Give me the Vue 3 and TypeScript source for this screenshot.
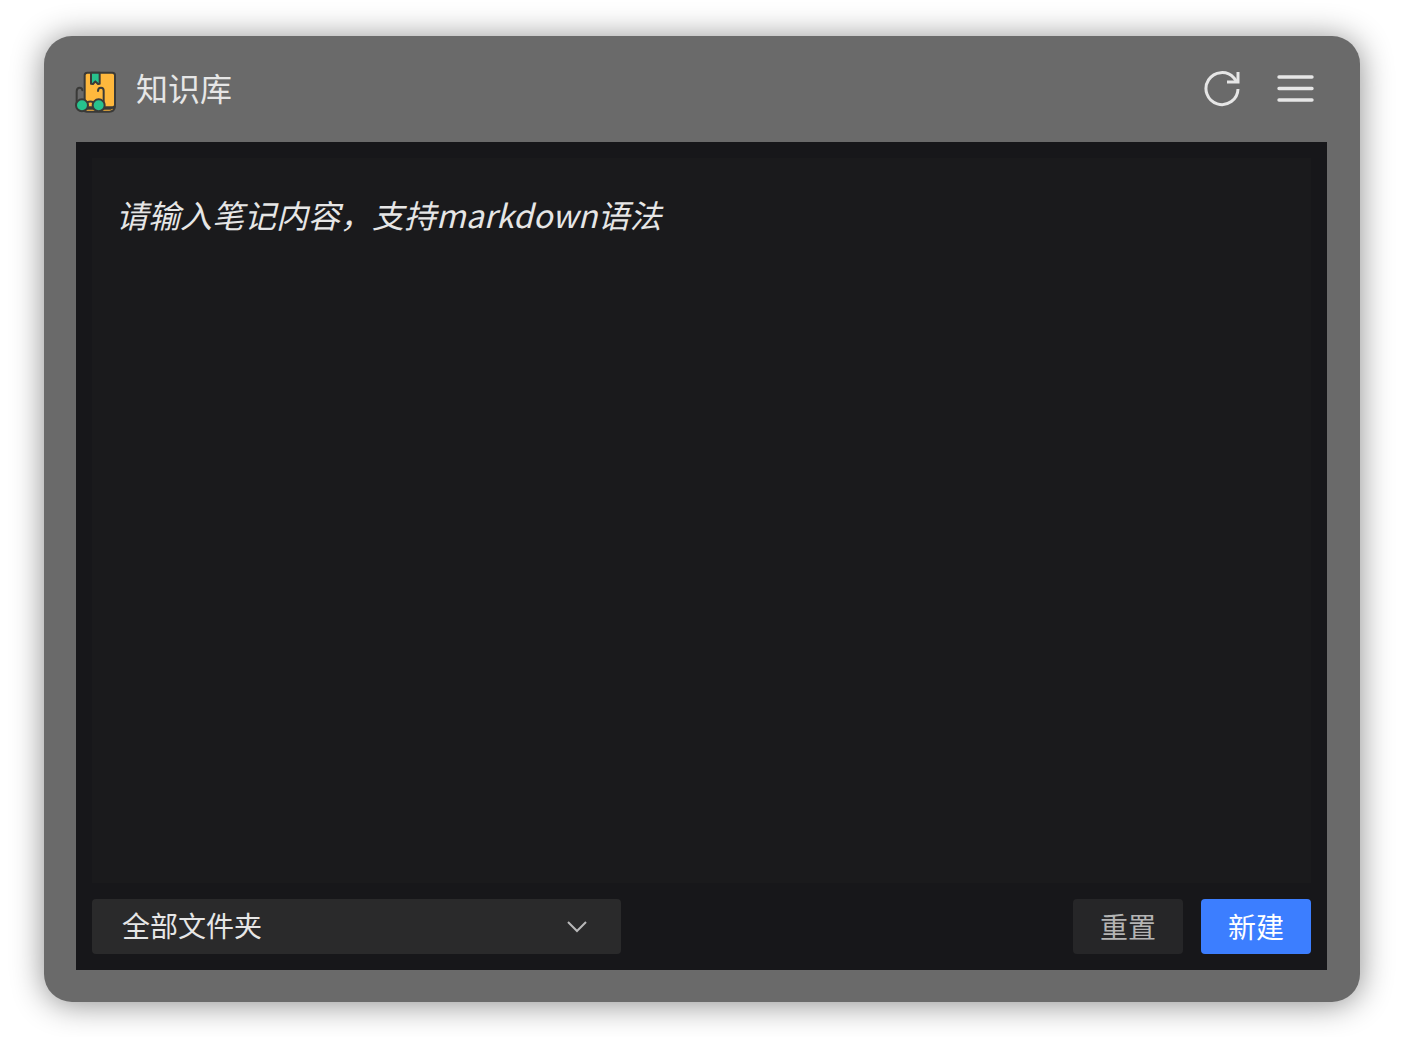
<script setup lang="ts">
import { ref } from 'vue'

const folders = ['全部文件夹']
const folder = ref(folders[0])
const note = ref('')

function reset() {
  note.value = ''
}
</script>

<template>
  <div class="page">
    <main class="panel">
      <header class="header">
        <svg class="logo" viewBox="24 30 132 132" fill="none" stroke="#3a3a38" stroke-width="6" stroke-linecap="round" stroke-linejoin="round" aria-hidden="true">
          <path d="M50 146 H134 L147 140 Q145 155 130 155 H63 Q50 153 50 146Z" fill="#ffb83d" />
          <path d="M56 134 V46 Q56 38 64 38 H139 Q147 38 147 46 V134 Q147 142 139 142 H56Z" fill="#ffb83d" />
          <path d="M75 38 H101 V71 L96 72 L88 64 L81 72 L75 71Z" fill="#27c28d" />
          <path d="M32 132 V94 Q32 83 41 83 Q49 83 49 91" />
          <path d="M96 93 Q96 83 105 83 Q113 83 113 92 V131" />
          <path d="M63 127 Q73 122 83 127" />
          <circle cx="48" cy="136" r="18" fill="#27c28d" />
          <circle cx="98" cy="136" r="18" fill="#27c28d" />
        </svg>
        <h1 class="title">知识库</h1>
        <button class="icon-button" type="button" aria-label="刷新" @click="reset">
          <svg viewBox="0 0 40 40" fill="none" stroke="#e6e6e6" stroke-width="3">
            <path d="M35 20 A16 16 0 1 1 31 9 L34 13" />
            <path d="M35 3 V13 H24" />
          </svg>
        </button>
        <button class="icon-button" type="button" aria-label="菜单">
          <svg viewBox="0 0 40 40" fill="none" stroke="#e6e6e6" stroke-width="3.4" stroke-linecap="round">
            <path d="M4 8 H37 M4 19.5 H37 M4 31 H37" />
          </svg>
        </button>
      </header>
      <section class="editor">
        <textarea v-model="note" class="note" aria-label="笔记内容" placeholder="请输入笔记内容，支持markdown语法"></textarea>
        <div class="actions">
          <div class="folder">
            <select v-model="folder" class="folder-select" aria-label="文件夹">
              <option v-for="name in folders" :key="name" :value="name">{{ name }}</option>
            </select>
            <svg class="arrow" viewBox="0 0 20 20" fill="none" stroke="#b8b8b9" stroke-width="2" aria-hidden="true">
              <path d="M1 5 L10 14 L19 5" />
            </svg>
          </div>
          <button class="button secondary" type="button" @click="reset">重置</button>
          <button class="button primary" type="button">新建</button>
        </div>
      </section>
    </main>
  </div>
</template>

<style>
body {
  background: #fff;
}
</style>

<style scoped>
.page {
  box-sizing: border-box;
  display: flex;
  min-height: 100vh;
  padding: 36px 45px 35px 44px;
  font-family: "Noto Sans CJK SC", sans-serif;
}
.panel {
  flex: 1;
  display: flex;
  flex-direction: column;
  padding: 0 33px 32px 32px;
  border-radius: 28px;
  background: #6a6a6a;
  box-shadow: 0 2px 32px rgba(0, 0, 0, 0.46);
}
.header {
  display: flex;
  align-items: center;
  height: 106px;
}
.logo {
  width: 44px;
  height: 44px;
  margin: 6px 18px 0 -2px;
}
.title {
  flex: 1;
  margin: 0;
  padding-bottom: 4px;
  font-size: 32px;
  line-height: 48px;
  font-weight: 400;
  color: #e6e6e6;
}
.icon-button {
  width: 40px;
  height: 40px;
  margin-right: 12px;
  padding: 0;
  border: 0;
  background: none;
}
.icon-button + .icon-button {
  margin-left: 20px;
}
.icon-button svg {
  display: block;
}
.editor {
  flex: 1;
  display: flex;
  flex-direction: column;
  gap: 16px;
  padding: 16px;
  background: #17171a;
}
.note {
  flex: 1;
  box-sizing: border-box;
  width: 100%;
  padding: 32px 24px;
  border: 0;
  outline: 0;
  resize: none;
  background: #1a1a1c;
  color: #e6e6e6;
  font-family: inherit;
  font-size: 32px;
  line-height: 48px;
}
.note::placeholder {
  color: #e6e6e6;
  font-style: italic;
  opacity: 1;
}
.actions {
  display: flex;
  gap: 18px;
}
.folder {
  position: relative;
  width: 43.4%;
  margin-right: auto;
}
.folder-select {
  appearance: none;
  width: 100%;
  height: 55px;
  padding: 0 60px 4px 30px;
  border: 0;
  border-radius: 4px;
  background: #2a2a2b;
  color: #e6e6e6;
  font-family: inherit;
  font-size: 28px;
}
.arrow {
  position: absolute;
  top: 18px;
  right: 34px;
  width: 20px;
  height: 20px;
  pointer-events: none;
}
.button {
  width: 110px;
  height: 55px;
  padding: 0 0 2px;
  border: 0;
  border-radius: 4px;
  font-family: inherit;
  font-size: 28px;
}
.secondary {
  background: #262628;
  color: #b4b4b4;
}
.primary {
  background: #3c7eff;
  color: #fff;
}
</style>
